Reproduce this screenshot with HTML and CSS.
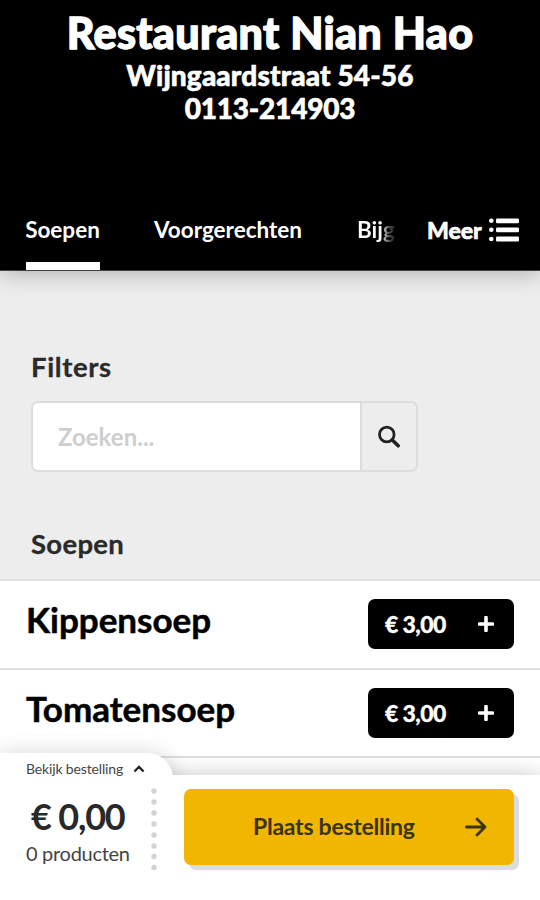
FILE: index.html
```html
<!DOCTYPE html>
<html lang="nl">
<head>
<meta charset="utf-8">
<title>Restaurant Nian Hao</title>
<link rel="stylesheet" href="styles.css">
</head>
<body>
<div class="screen">
  <header class="header">
    <h1 class="name">Restaurant Nian Hao</h1>
    <p class="contact">Wijngaardstraat 54-56</p>
    <p class="contact phone">0113-214903</p>
    <nav class="tabs">
      <div class="tab-list">
        <a class="tab active">Soepen</a>
        <a class="tab second">Voorgerechten</a>
        <a class="tab clipped">Bijg</a>
      </div>
      <a class="more"><span>Meer</span>
        <svg class="list-icon" viewBox="0 0 30 24"><g fill="#fff"><circle cx="2.3" cy="2.8" r="2.3"/><circle cx="2.3" cy="11.8" r="2.3"/><circle cx="2.3" cy="21" r="2.3"/><rect x="7" y=".5" width="23" height="4.8" rx="1.2"/><rect x="7" y="9.5" width="23" height="4.8" rx="1.2"/><rect x="7" y="18.6" width="23" height="4.8" rx="1.2"/></g></svg>
      </a>
    </nav>
  </header>
  <main class="content">
    <h2 class="heading filters">Filters</h2>
    <div class="search">
      <div class="search-input">Zoeken...</div>
      <div class="search-button">
        <svg class="search-icon" viewBox="0 0 24 24" fill="none" stroke="#222"><circle cx="9.8" cy="9.5" r="7.3" stroke-width="2.8"/><path d="M15.2 15l6 5.8" stroke-width="3.6" stroke-linecap="round"/></svg>
      </div>
    </div>
    <h2 class="heading group">Soepen</h2>
    <section class="menu">
      <article class="dish">
        <h3 class="dish-name">Kippensoep</h3>
        <div class="price"><span>€ 3,00</span><svg class="plus" viewBox="0 0 16 16"><path d="M8 1.5v13M1.5 8h13" stroke="#fff" stroke-width="3.6" stroke-linecap="round"/></svg></div>
      </article>
      <article class="dish">
        <h3 class="dish-name">Tomatensoep</h3>
        <div class="price"><span>€ 3,00</span><svg class="plus" viewBox="0 0 16 16"><path d="M8 1.5v13M1.5 8h13" stroke="#fff" stroke-width="3.6" stroke-linecap="round"/></svg></div>
      </article>
    </section>
  </main>
  <footer class="cart">
    <div class="cart-tab"></div>
    <div class="cart-bar">
      <div class="summary">
        <div class="view"><span>Bekijk bestelling</span><svg class="chevron" viewBox="0 0 12 8"><path d="M1.4 6.5L6 1.9l4.6 4.6" fill="none" stroke="#222" stroke-width="2.2"/></svg></div>
        <div class="total">€ 0,00</div>
        <div class="count">0 producten</div>
      </div>
      <svg class="dots" viewBox="0 0 6 83"><g fill="#d3d3d3"><circle cx="3" cy="3" r="2.7"/><circle cx="3" cy="14" r="2.7"/><circle cx="3" cy="25" r="2.7"/><circle cx="3" cy="36" r="2.7"/><circle cx="3" cy="47" r="2.7"/><circle cx="3" cy="58" r="2.7"/><circle cx="3" cy="68.5" r="2.7"/><circle cx="3" cy="79.5" r="2.7"/></g></svg>
      <div class="order"><span>Plaats bestelling</span><svg class="arrow" viewBox="0 0 22 20"><path d="M1.5 10h18.5M12 2l8 8-8 8" fill="none" stroke="#3c3214" stroke-width="2.8" stroke-linecap="round" stroke-linejoin="round"/></svg></div>
    </div>
  </footer>
</div>
</body>
</html>
```
FILE: styles.css
```css
* { box-sizing: border-box; }
body, h1, h2, h3, p { margin: 0; }
body { font-family: Lato, "Liberation Sans", sans-serif; background: #ededed; }
span, a, h1, h2, h3, p { white-space: nowrap; }
svg { display: block; flex: none; }
.screen { position: relative; width: 540px; height: 900px; overflow: hidden; display: flex; flex-direction: column; }
.header { height: 271px; flex: none; background: #000; color: #fff; text-align: center; display: flex; flex-direction: column; align-items: center; box-shadow: 0 2px 22px rgba(0,0,0,.28); z-index: 1; border-bottom: 1px solid #444; }
.name { font-size: 43px; font-weight: 900; line-height: 50px; margin-top: 8px; letter-spacing: .35px; -webkit-text-stroke: 1.3px #fff; }
.contact { font-size: 28px; font-weight: 900; line-height: 33px; letter-spacing: .15px; -webkit-text-stroke: .6px #fff; }
.name + .contact { margin-top: 1px; }
.phone { letter-spacing: -.2px; }
.tabs { width: 540px; margin-top: auto; height: 62px; display: flex; padding-left: 26px; }
.tab-list { display: flex; width: 370px; overflow: hidden; }
.tab { font-size: 22.5px; font-weight: 700; line-height: 43px; height: 62px; flex: none; }
.active { width: 74px; margin-right: 53px; border-bottom: 8px solid #fff; text-indent: -1px; }
.second { width: 150px; margin-right: 54px; }
.clipped { background: linear-gradient(90deg, #fff 24px, #555 32px, #111 39px); background-clip: text; -webkit-background-clip: text; color: transparent; }
.more { display: flex; margin-left: 31px; font-size: 23px; font-weight: 900; line-height: 45px; -webkit-text-stroke: .6px #fff; letter-spacing: -.1px; }
.list-icon { width: 30px; height: 24px; margin: 10px 0 0 8px; }
.content { flex: 1; }
.heading { font-size: 27.5px; font-weight: 700; line-height: 34px; color: #2a2a2a; margin-left: 31px; letter-spacing: .3px; -webkit-text-stroke: .3px #2a2a2a; }
.filters { margin-top: 79px; letter-spacing: .6px; }
.search { display: flex; width: 387px; height: 71px; margin: 17px 0 0 31px; border: 2px solid #dcdcdc; border-radius: 7px; }
.search-input { width: 329px; background: #fff; border-right: 2px solid #dcdcdc; border-radius: 5px 0 0 5px; padding-left: 25px; font-size: 24px; font-weight: 700; line-height: 67px; color: #cecece; }
.search-button { flex: 1; display: flex; align-items: center; justify-content: center; }
.search-icon { width: 24px; height: 24px; }
.group { margin-top: 55px; }
.menu { margin-top: 18px; background: #fff; }
.dish { height: 89px; border-top: 2px solid #e0e0e0; display: flex; justify-content: space-between; padding: 18px 26px 0; }
.dish-name { font-size: 35px; font-weight: 700; line-height: 44px; color: #000; margin-top: -2px; -webkit-text-stroke: .5px #000; }
.price { width: 146px; height: 50px; border-radius: 7px; background: #000; color: #fff; display: flex; align-items: center; padding: 0 20px 0 17px; justify-content: space-between; font-size: 23px; font-weight: 900; letter-spacing: -.6px; -webkit-text-stroke: .3px #fff; }
.plus { width: 16px; height: 16px; }
.cart { position: absolute; z-index: 2; left: 0; bottom: 0; width: 540px; height: 147px; display: flex; align-items: flex-end; }
.cart::before { content: ""; position: absolute; top: 3px; left: 0; width: 540px; height: 120px; border-top: 2px solid #e0e0e0; background: #fff; }
.cart-tab { position: absolute; left: 0; top: 0; width: 173px; height: 60px; background: #fff; border-top-right-radius: 26px; box-shadow: 0 0 22px rgba(0,0,0,.16); }
.cart-bar { position: relative; width: 540px; height: 125px; background: #fff; display: flex; box-shadow: 0 0 20px rgba(0,0,0,.22); }
.cart-bar::before { content: ""; position: absolute; left: 0; top: -22px; width: 173px; height: 40px; background: #fff; border-top-right-radius: 26px; }
.summary { position: relative; width: 150px; padding-left: 26px; margin-top: -18px; color: #444; }
.view { display: flex; align-items: center; gap: 10px; font-size: 14px; line-height: 24px; height: 24px; letter-spacing: -.15px; }
.chevron { width: 12px; height: 8px; }
.total { font-size: 36px; font-weight: 700; line-height: 42px; margin: 14px 0 0 5px; color: #292929; white-space: nowrap; letter-spacing: -1.2px; }
.count { font-size: 20px; line-height: 28px; white-space: nowrap; margin-top: 2px; letter-spacing: -.3px; }
.dots { position: relative; width: 6px; height: 83px; margin: 13px 0 0 1px; }
.order { width: 330px; height: 76px; margin: 14px 0 0 27px; border-radius: 7px; background: #f1b700; box-shadow: 5px 5px 0 #dcdcdc; color: #3c3214; display: flex; align-items: center; padding: 0 0 2px 69px; font-size: 23px; font-weight: 700; letter-spacing: -.25px; }
.arrow { width: 22px; height: 20px; margin: 1px 27px 0 auto; }
```
